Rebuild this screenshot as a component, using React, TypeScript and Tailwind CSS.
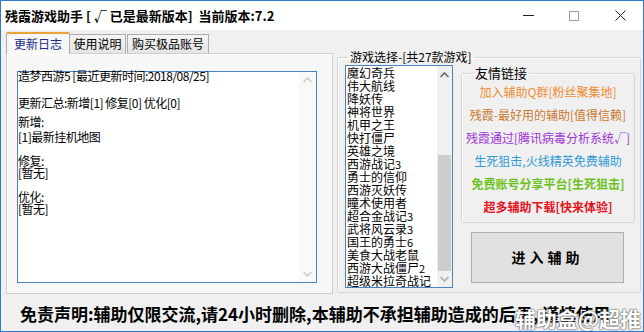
import React from "react";

const games = [
  "魔幻奇兵",
  "伟大航线",
  "降妖传",
  "神将世界",
  "机甲之王",
  "快打僵尸",
  "英雄之境",
  "西游战记3",
  "勇士的信仰",
  "西游灭妖传",
  "瞳术使用者",
  "超合金战记3",
  "武将风云录3",
  "国王的勇士6",
  "美食大战老鼠",
  "西游大战僵尸2",
  "超级米拉奇战记",
];

function GameName({ name }: { name: string }) {
  const m = name.match(/^(.*?)(\d*)$/);
  const base = m ? m[1] : name;
  const num = m ? m[2] : "";
  return (
    <div className="h-[13px] leading-[13px] whitespace-nowrap text-[12px] text-black">
      {base}
      {num && <span className="text-[11px]">{num}</span>}
    </div>
  );
}

export default function App() {
  const font = { fontFamily: '"Noto Sans CJK SC", "Noto Sans", sans-serif' };
  return (
    <div
      className="w-[644px] h-[332px] border border-[#2c7bd0] bg-[#f0f0f0] flex flex-col overflow-hidden relative"
      style={font}
    >
      {/* Title bar */}
      <div className="h-[29px] bg-white flex items-center shrink-0">
        <div className="pl-[4px] text-[13px] font-bold text-black whitespace-nowrap leading-[16px]">
          残霞游戏助手 [ √ 已是最新版本]&nbsp;&nbsp;当前版本:7.2
        </div>
        <div className="flex-1" />
        <div className="flex h-full">
          <div className="w-[46px] h-full flex items-center justify-center">
            <div className="w-[11px] h-px bg-[#222]" />
          </div>
          <div className="w-[46px] h-full flex items-center justify-center">
            <div className="w-[10px] h-[10px] border border-[#9a9a9a]" />
          </div>
          <div className="w-[46px] h-full flex items-center justify-center">
            <svg width="11" height="11" viewBox="0 0 11 11">
              <path d="M0.5 0.5 L10.5 10.5 M10.5 0.5 L0.5 10.5" stroke="#222" strokeWidth="1" />
            </svg>
          </div>
        </div>
      </div>

      {/* Main row */}
      <div className="h-[264px] flex shrink-0">
        {/* Left: tabs */}
        <div className="ml-[5px] w-[327px] flex flex-col">
          <div className="mt-[2px] h-[21px] flex items-end relative z-10">
            <div className="h-[22px] mb-[-1px] w-[64px] border border-b-0 border-[#a9a9a9] border-t-[#e8a23a] border-t-2 bg-[#f7f7f7] flex items-center justify-center text-[12px] text-[#1b2a86] rounded-t-[2px]">
              更新日志
            </div>
            <div className="h-[19px] w-[56px] border border-b-0 border-l-0 border-[#acacac] bg-gradient-to-b from-[#f5f5f5] to-[#e4e4e4] flex items-center justify-center text-[12px] text-black">
              使用说明
            </div>
            <div className="h-[19px] w-[82px] ml-px border border-b-0 border-[#acacac] bg-gradient-to-b from-[#f5f5f5] to-[#e4e4e4] flex items-center justify-center text-[12px] text-black">
              购买极品账号
            </div>
          </div>
          <div className="h-[241px] border border-[#cfcfcf] bg-[#f7f7f7] shadow-[inset_1px_1px_0_#ffffff] pl-[10px] pt-[17px]">
            <div className="w-[300px] h-[212px] border border-[#4a83c2] bg-white flex">
              <div className="flex-1 text-[12px] text-black whitespace-nowrap tracking-[-0.5px]">
                <div className="h-[14px] leading-[14px] mt-[-3px]">造梦西游5 [最近更新时间:2018/08/25]</div>
                <div className="h-[14px] leading-[14px] mt-[13px]">更新汇总:新增[1] 修复[0] 优化[0]</div>
                <div className="h-[14px] leading-[14px] mt-[5px]">新增:</div>
                <div className="h-[14px] leading-[14px] mt-[1px]">[1]最新挂机地图</div>
                <div className="h-[14px] leading-[14px] mt-[10px]">修复:</div>
                <div className="h-[14px] leading-[14px] mt-[-2px]">[暂无]</div>
                <div className="h-[14px] leading-[14px] mt-[10px]">优化:</div>
                <div className="h-[14px] leading-[14px] mt-[-2px]">[暂无]</div>
              </div>
              <div className="w-[17px] bg-[#f9f9f9] flex flex-col items-center justify-between py-[5px]">
                <svg width="9" height="6" viewBox="0 0 9 6">
                  <path d="M0.5 5 L4.5 1 L8.5 5" fill="none" stroke="#c8c8c8" strokeWidth="1.4" />
                </svg>
                <svg width="9" height="6" viewBox="0 0 9 6">
                  <path d="M0.5 1 L4.5 5 L8.5 1" fill="none" stroke="#c8c8c8" strokeWidth="1.4" />
                </svg>
              </div>
            </div>
          </div>
        </div>

        {/* Right: game group */}
        <fieldset className="ml-[4px] mt-[20px] w-[304px] h-[243px] border border-[#d6d6d6] rounded-[2px] shadow-[inset_1px_1px_0_#ffffff] flex">
          <legend className="ml-[10px] px-[2px] text-[12px] leading-[14px] text-black whitespace-nowrap">
            游戏选择-[共27款游戏]
          </legend>
          <div className="flex pl-[7px] pt-px w-full">
            <div className="w-[108px] h-[223px] border border-[#4a83c2] bg-white flex overflow-hidden">
              <div className="flex-1 pl-px overflow-hidden">
                {games.map((g) => (
                  <GameName key={g} name={g} />
                ))}
              </div>
              <div className="w-[15px] bg-[#f0f0f0] flex flex-col items-center">
                <div className="h-[17px] flex items-center justify-center">
                  <svg width="9" height="6" viewBox="0 0 9 6">
                    <path d="M0.5 5 L4.5 1 L8.5 5" fill="none" stroke="#606060" strokeWidth="1.5" />
                  </svg>
                </div>
                <div className="h-[72px]" />
                <div className="w-[13px] h-[116px] bg-[#cdcdcd]" />
                <div className="flex-1 flex items-center justify-center">
                  <svg width="9" height="6" viewBox="0 0 9 6">
                    <path d="M0.5 1 L4.5 5 L8.5 1" fill="none" stroke="#a8a8a8" strokeWidth="1.5" />
                  </svg>
                </div>
              </div>
            </div>
            <div className="ml-[8px] flex flex-col">
              <fieldset className="w-[174px] h-[158px] border border-[#d6d6d6] rounded-[2px] shadow-[inset_1px_1px_0_#ffffff]">
                <legend className="ml-[11px] px-[2px] text-[13px] leading-[16px] text-black">友情链接</legend>
                <div className="mt-[-1px] flex flex-col text-[12px] text-center whitespace-nowrap">
                  <div className="h-[23px] leading-[23px] text-[#ef8d33]">加入辅助Q群[粉丝聚集地]</div>
                  <div className="h-[23px] leading-[23px] text-[#c8782e]">残霞-最好用的辅助[值得信赖]</div>
                  <div className="h-[23px] leading-[23px] text-[#9b35d6]">残霞通过[腾讯病毒分析系统√]</div>
                  <div className="h-[23px] leading-[23px] text-[#2f9ad6]">生死狙击,火线精英免费辅助</div>
                  <div className="h-[23px] leading-[23px] text-[#6cc21c] font-bold">免费账号分享平台[生死狙击]</div>
                  <div className="h-[23px] leading-[23px] text-[#e3141c] font-bold">超多辅助下载[快来体验]</div>
                </div>
              </fieldset>
              <button className="mt-[9px] ml-[10px] w-[153px] h-[51px] border border-[#adadad] bg-[#e1e1e1] text-[14px] font-bold text-black tracking-[4px] flex items-center justify-center">
                进入辅助
              </button>
            </div>
          </div>
        </fieldset>
      </div>

      {/* Disclaimer */}
      <div className="h-[37px] flex items-center pl-[19px] shrink-0">
        <div className="text-[17px] font-bold text-black whitespace-nowrap leading-[20px] mt-[2px]">
          免责声明:辅助仅限交流,请24小时删除,本辅助不承担辅助造成的后果, 谨慎使用
        </div>
      </div>

      {/* Watermark */}
      <div className="absolute right-[2px] bottom-0 text-[21px] font-bold text-white leading-[26px] whitespace-nowrap [text-shadow:0_0_2px_#444,0_0_1px_#444]">
        辅助盒@超推
      </div>
    </div>
  );
}
